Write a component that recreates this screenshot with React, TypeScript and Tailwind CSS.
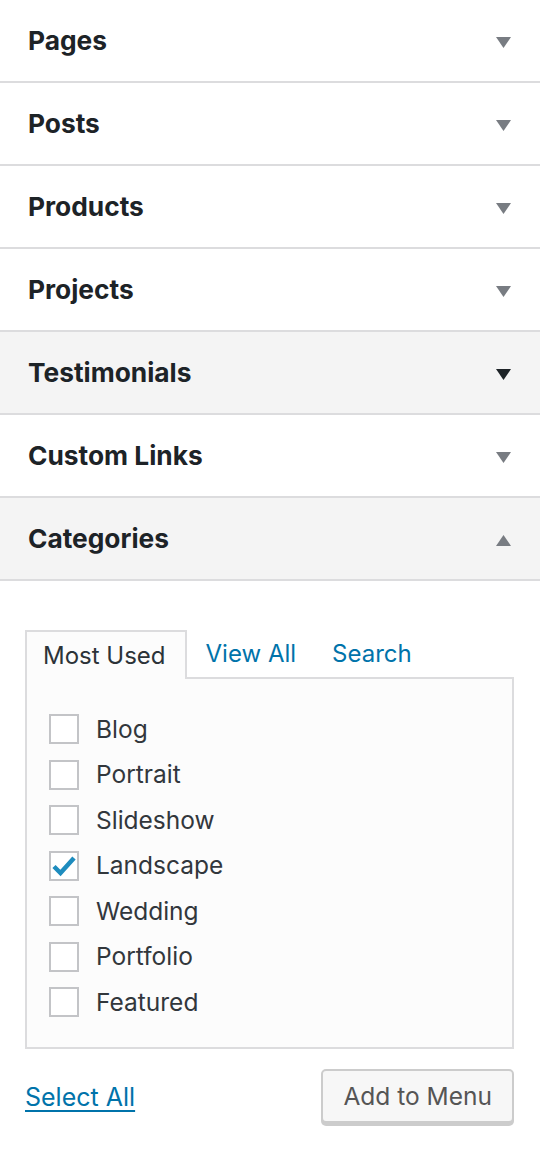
import React from "react";

const sections = [
  { name: "Pages", bg: "bg-white", arrow: "text-[#787c82]", open: false },
  { name: "Posts", bg: "bg-white", arrow: "text-[#787c82]", open: false },
  { name: "Products", bg: "bg-white", arrow: "text-[#787c82]", open: false },
  { name: "Projects", bg: "bg-white", arrow: "text-[#787c82]", open: false },
  { name: "Testimonials", bg: "bg-[#f4f4f4]", arrow: "text-[#1d2327]", open: false },
  { name: "Custom Links", bg: "bg-white", arrow: "text-[#787c82]", open: false },
  { name: "Categories", bg: "bg-[#f4f4f4]", arrow: "text-[#787c82]", open: true },
];

const categories = [
  { name: "Blog", checked: false },
  { name: "Portrait", checked: false },
  { name: "Slideshow", checked: false },
  { name: "Landscape", checked: true },
  { name: "Wedding", checked: false },
  { name: "Portfolio", checked: false },
  { name: "Featured", checked: false },
];

function Arrow({ up, className }: { up: boolean; className: string }) {
  return (
    <svg width="15" height="11" viewBox="0 0 15 11" className={`${className} mt-[3px]`}>
      {up ? <polygon points="0,11 15,11 7.5,0" fill="currentColor" /> : <polygon points="0,0 15,0 7.5,11" fill="currentColor" />}
    </svg>
  );
}

export default function App() {
  return (
    <div className="w-[540px] min-h-[1157px] bg-white font-['Inter',sans-serif]">
      {sections.map((s) => (
        <div
          key={s.name}
          className={`${s.bg} h-[83px] border-b-2 border-[#dcdcde] flex items-center justify-between pl-7 pr-[29px] pt-[1px]`}
        >
          <span className="text-[26.3px] font-bold text-[#1d2327]">{s.name}</span>
          <Arrow up={s.open} className={s.arrow} />
        </div>
      ))}

      <div className="pt-[49px] pl-[25px] pr-[26px]">
        <div className="flex items-end text-[24px] relative z-10">
          <div className="h-[49px] border-2 border-b-0 border-[#dcdcde] bg-[#fcfcfc] pl-[16px] pr-[19px] flex items-center text-[#2c3338] -mb-[2px]">
            Most Used
          </div>
          <div className="h-[47px] flex items-center pl-[19px] text-[#0073aa]">View All</div>
          <div className="h-[47px] flex items-center pl-[36px] text-[#0073aa]">Search</div>
        </div>
        <div className="border-2 border-[#dcdcde] bg-[#fcfcfc] pt-[35px] pb-[30px] pl-[22px] flex flex-col gap-[15.5px]">
          {categories.map((c) => (
            <label key={c.name} className="flex items-center gap-[17px] text-[24.5px] text-[#32373c] h-[30px]">
              <span className="w-[30px] h-[30px] border-2 border-[#c3c4c7] bg-white flex items-center justify-center">
                {c.checked && (
                  <svg width="26" height="24" viewBox="0 0 26 24">
                    <path d="M3 12.5 L9.5 19 L23 4" stroke="#1e8cbe" strokeWidth="4.5" fill="none" />
                  </svg>
                )}
              </span>
              {c.name}
            </label>
          ))}
        </div>
        <div className="flex items-center justify-between mt-[20px]">
          <a className="text-[25px] text-[#0073aa] underline underline-offset-[4px] mt-[3px]">Select All</a>
          <button className="h-[54px] px-[20px] rounded-[5px] border-2 border-[#cccccc] bg-[#f7f7f7] shadow-[0_3px_0_#cccccc] text-[24.5px] text-[#555555]">
            Add to Menu
          </button>
        </div>
      </div>
    </div>
  );
}
